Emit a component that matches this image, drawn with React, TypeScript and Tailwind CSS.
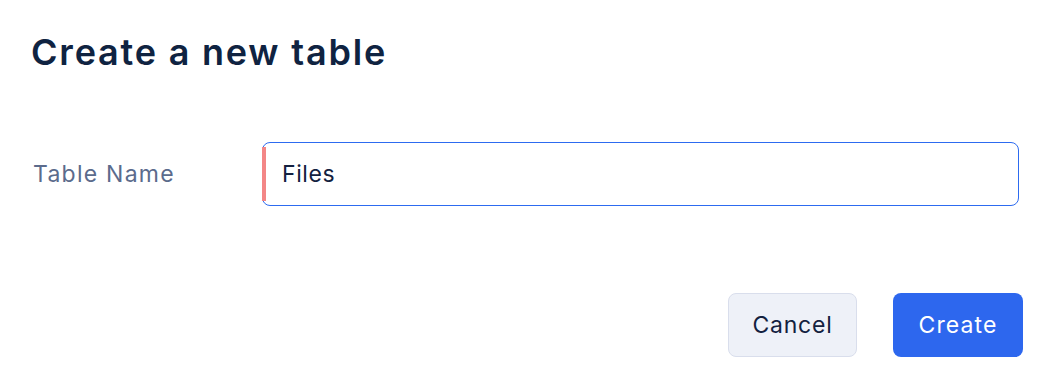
import React from "react";

export default function App() {
  return (
    <div className="w-[1052px] h-[388px] bg-white font-['Inter',sans-serif] px-8 pt-[26px]">
      <h1 className="text-[36px] leading-[52px] font-semibold text-[#0f2341] tracking-[1.8px] -ml-px">Create a new table</h1>
      <div className="flex items-center mt-[64px]">
        <label className="w-[230px] text-[23px] text-[#5b6b8c] pl-px tracking-[1.25px]">Table Name</label>
        <div className="relative flex-1 mr-[1px]">
          <div className="absolute left-0 top-[5px] bottom-[5px] w-[4px] bg-[#f38686]" />
          <input
            defaultValue="Files"
            className="w-full h-[64px] rounded-[8px] border border-[#2d6bf0] pl-[19px] text-[23px] tracking-[0.6px] text-[#13213f] outline-none bg-transparent"
          />
        </div>
      </div>
      <div className="flex justify-end gap-[36px] mt-[87px] mr-[-3px]">
        <button className="w-[129px] h-[64px] rounded-[8px] bg-[#eef1f8] border border-[#d9deec] text-[23px] tracking-[0.8px] text-[#13213f]">Cancel</button>
        <button className="w-[130px] h-[64px] rounded-[8px] bg-[#2d67ee] text-[23px] tracking-[1.1px] text-white">Create</button>
      </div>
    </div>
  );
}
